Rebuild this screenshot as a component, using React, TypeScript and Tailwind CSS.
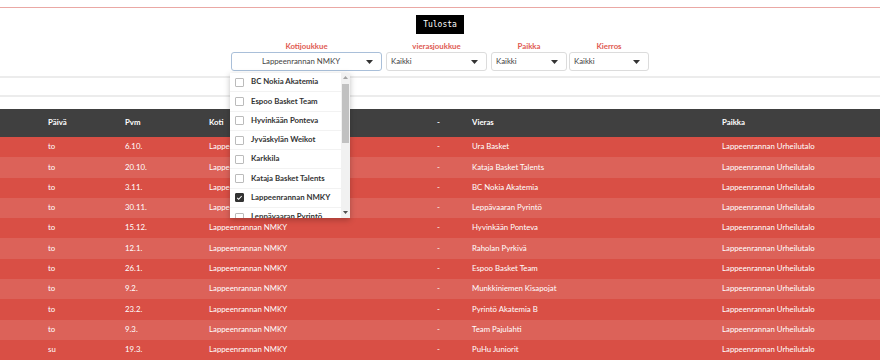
import React from "react";

const rows = [
  ["to", "6.10.", "Ura Basket"],
  ["to", "20.10.", "Kataja Basket Talents"],
  ["to", "3.11.", "BC Nokia Akatemia"],
  ["to", "30.11.", "Leppävaaran Pyrintö"],
  ["to", "15.12.", "Hyvinkään Ponteva"],
  ["to", "12.1.", "Raholan Pyrkivä"],
  ["to", "26.1.", "Espoo Basket Team"],
  ["to", "9.2.", "Munkkiniemen Kisapojat"],
  ["to", "23.2.", "Pyrintö Akatemia B"],
  ["to", "9.3.", "Team Pajulahti"],
  ["su", "19.3.", "PuHu Juniorit"],
];

const options = [
  "BC Nokia Akatemia",
  "Espoo Basket Team",
  "Hyvinkään Ponteva",
  "Jyväskylän Weikot",
  "Karkkila",
  "Kataja Basket Talents",
  "Lappeenrannan NMKY",
  "Leppävaaran Pyrintö",
];

function Caret() {
  return (
    <svg width="7" height="4" viewBox="0 0 7 4">
      <path d="M0 0h7L3.5 4z" fill="#333" />
    </svg>
  );
}

function Select({ w, text, center, focus }: { w: string; text: string; center?: boolean; focus?: boolean }) {
  return (
    <div
      className={`${w} h-[19px] rounded-[3px] border ${focus ? "border-[#a9bfd9]" : "border-[#dcdcdc]"} bg-white flex items-center pl-[4px] pr-[8px] text-[7.8px] text-[#444] whitespace-nowrap`}
    >
      <span className={`flex-1 ${center ? "text-center" : ""}`}>{text}</span>
      <Caret />
    </div>
  );
}

export default function App() {
  return (
    <div className="w-[880px] h-[360px] overflow-hidden bg-white relative" style={{ fontFamily: "Lato, 'Open Sans', sans-serif" }}>
      <div className="h-[7px]" />
      <div className="h-px bg-[#eaa8a4]" />
      <div className="flex justify-center pt-[7px]">
        <div className="h-[19px] px-[7px] bg-black text-white text-[8px] flex items-center" style={{ fontFamily: "'DejaVu Sans Mono', monospace" }}>
          Tulosta
        </div>
      </div>
      <div className="flex justify-center items-end gap-[4px] pt-[6px] relative">
        <div className="flex flex-col items-center">
          <div className="text-[7.8px] font-bold text-[#e05a52] h-[12px] leading-[12px]">Kotijoukkue</div>
          <Select w="w-[151px]" text="Lappeenrannan NMKY" center focus />
        </div>
        <div className="flex flex-col items-center">
          <div className="text-[7.8px] font-bold text-[#e05a52] h-[12px] leading-[12px]">vierasjoukkue</div>
          <Select w="w-[101px]" text="Kaikki" />
        </div>
        <div className="flex flex-col items-center">
          <div className="text-[7.8px] font-bold text-[#e05a52] h-[12px] leading-[12px]">Paikka</div>
          <Select w="w-[76px]" text="Kaikki" />
        </div>
        <div className="flex flex-col items-center ml-[-2px]">
          <div className="text-[7.8px] font-bold text-[#e05a52] h-[12px] leading-[12px]">Kierros</div>
          <Select w="w-[80px]" text="Kaikki" />
        </div>
      </div>
      <div className="mt-[5px] h-[21px] border-t-2 border-b-2 border-[#ececec]" />
      <div className="h-[12px]" />
      <div className="grid grid-cols-[77px_84px_228px_35px_250px_1fr] pl-[48px] h-[28px] items-center bg-[#404040] text-white text-[7.8px] font-bold">
        <div>Päivä</div>
        <div>Pvm</div>
        <div>Koti</div>
        <div>-</div>
        <div>Vieras</div>
        <div>Paikka</div>
      </div>
      {rows.map((r, i) => (
        <div
          key={i}
          className={`grid grid-cols-[77px_84px_228px_35px_250px_1fr] pl-[48px] h-[20.3px] items-center text-[7.8px] text-white ${i % 2 === 0 ? "bg-[#d94f45]" : "bg-[#dc6259]"}`}
        >
          <div>{r[0]}</div>
          <div>{r[1]}</div>
          <div>Lappeenrannan NMKY</div>
          <div>-</div>
          <div>{r[2]}</div>
          <div>Lappeenrannan Urheilutalo</div>
        </div>
      ))}

      {/* Dropdown overlay */}
      <div className="absolute left-[230px] top-[73px] w-[120px] h-[145px] bg-white shadow-[0_2px_6px_rgba(0,0,0,0.25)] overflow-hidden flex">
        <div className="flex-1 flex flex-col">
          {options.map((o) => {
            const checked = o === "Lappeenrannan NMKY";
            return (
              <div key={o} className="h-[19.3px] shrink-0 flex items-center pl-[5px] border-b border-[#f2f2f2] text-[7.8px] font-bold text-[#333] whitespace-nowrap">
                <div
                  className={`w-[9px] h-[9px] shrink-0 rounded-[1px] border flex items-center justify-center ${checked ? "bg-[#333] border-[#333]" : "border-[#bbb] bg-white"}`}
                >
                  {checked && (
                    <svg width="7" height="7" viewBox="0 0 7 7">
                      <path d="M1.2 3.8l1.5 1.5 3-3.3" stroke="#fff" strokeWidth="1.1" fill="none" />
                    </svg>
                  )}
                </div>
                <span className="ml-[7px]">{o}</span>
              </div>
            );
          })}
        </div>
        <div className="w-[9px] bg-[#f1f1f1] flex flex-col items-center">
          <svg width="5" height="3" viewBox="0 0 5 3" className="mt-[3px]">
            <path d="M0 3h5L2.5 0z" fill="#a3a3a3" />
          </svg>
          <div className="w-[7px] h-[59px] bg-[#c1c1c1] mt-[5px]" />
          <div className="flex-1" />
          <svg width="5" height="3" viewBox="0 0 5 3" className="mb-[4px]">
            <path d="M0 0h5L2.5 3z" fill="#505050" />
          </svg>
        </div>
      </div>
    </div>
  );
}
